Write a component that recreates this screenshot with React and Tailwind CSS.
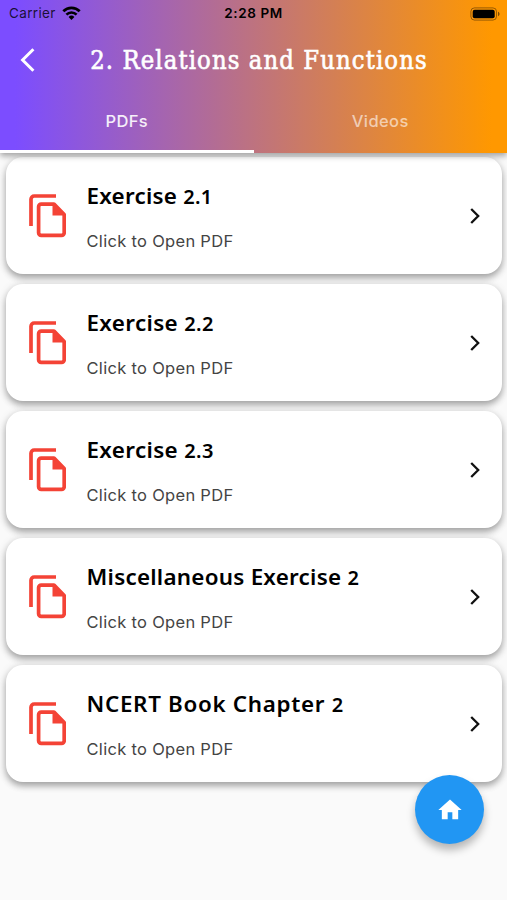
import React, { useState } from "react";

const pdfs = [
  { name: "Exercise", number: "2.1", spacing: "tracking-[0.25px]" },
  { name: "Exercise", number: "2.2", spacing: "tracking-[0.36px]" },
  { name: "Exercise", number: "2.3", spacing: "tracking-[0.36px]" },
  { name: "Miscellaneous Exercise", number: "2", spacing: "tracking-[0.25px]" },
  { name: "NCERT Book Chapter", number: "2", spacing: "tracking-[0.68px]" },
];

function StatusBar() {
  return (
    <div className="grid grid-cols-3 items-center h-7 pl-[9px] pr-[7px] text-[13.5px] leading-none text-black">
      <div className="flex items-center gap-[6px]">
        <span className="tracking-[0.35px] text-black/80">Carrier</span>
        <svg className="w-[19px] h-[14px] -mt-[2px]" viewBox="0 0 19 14" fill="none" stroke="currentColor">
          <path strokeWidth="2.7" d="M1.3 5.3a11.6 11.6 0 0 1 16.4 0" />
          <path strokeWidth="2.6" d="M4.4 8.6a7.2 7.2 0 0 1 10.2 0" />
          <path fill="currentColor" stroke="none" d="M9.5 14L6.6 11a4.1 4.1 0 0 1 5.8 0z" />
        </svg>
      </div>
      <span className="-ml-[2px] text-center font-semibold tracking-[0.6px] whitespace-nowrap">2:28 PM</span>
      <svg className="justify-self-end w-[30px] h-[14px] -mt-[1px]" viewBox="0 0 30 14" fill="none">
        <rect x="0.9" y="0.9" width="25.6" height="12.2" rx="3.6" stroke="#000" strokeOpacity="0.4" />
        <rect x="2.7" y="2.7" width="22" height="8.6" rx="2" fill="#000" />
        <path d="M28 4.8c2 .7 2 3.7 0 4.4z" fill="#000" fillOpacity="0.5" />
      </svg>
    </div>
  );
}

function PdfIcon() {
  return (
    <svg className="w-[37px] h-[44px] shrink-0" viewBox="0 0 37 44" fill="none">
      <path
        d="M27 2H5.2A3.2 3.2 0 0 0 2 5.2V32"
        stroke="#f44336"
        strokeWidth="3.7"
      />
      <path
        d="M12.2 10.1H25L35.2 20.5V38.8A2.6 2.6 0 0 1 32.6 41.4H12.2A2.6 2.6 0 0 1 9.6 38.8V12.7A2.6 2.6 0 0 1 12.2 10.1Z"
        stroke="#f44336"
        strokeWidth="3.7"
        strokeLinejoin="round"
      />
      <path d="M23.5 9.5V21.6H36V20L25.5 9.5z" fill="#f44336" />
    </svg>
  );
}

function PdfCard({ pdf }) {
  return (
    <button className="flex items-center w-full h-[117px] pt-[1px] pl-[23px] pr-[21px] rounded-[17px] bg-white text-left shadow-[0_4px_6px_rgba(0,0,0,0.26),0_2px_10px_rgba(0,0,0,0.16)]">
      <PdfIcon />
      <div className="flex flex-col grow pt-[2px] pl-[20.5px]">
        <span
          className={`font-['Noto_Sans'] font-semibold text-[22.4px] leading-[30px] text-black whitespace-nowrap ${pdf.spacing}`}
        >
          {pdf.name} <span className="text-[20px]">{pdf.number}</span>
        </span>
        <span className="mt-[17px] text-[16.5px] leading-[24px] tracking-[0.3px] text-[#444]">
          Click to Open PDF
        </span>
      </div>
      <svg className="w-[12px] h-[18px] shrink-0" viewBox="0 0 12 18" fill="none">
        <path d="M2.2 2L9.2 9L2.2 16" stroke="#111" strokeWidth="2.3" />
      </svg>
    </button>
  );
}

export default function App() {
  const [tab, setTab] = useState("pdfs");

  return (
    <div className="relative flex flex-col w-full h-[900px] overflow-hidden bg-[#fafafa] font-['Inter',sans-serif]">
      {/* Header */}
      <header className="relative z-10 flex flex-col h-[153px] shrink-0 bg-linear-to-r/srgb from-[#7c4dff] from-[3%] to-[#ff9800] to-[97%] shadow-[0_3px_6px_rgba(0,0,0,0.35)]">
        <StatusBar />
        <div className="flex items-center h-[63px] px-[20px]">
          <button className="w-[16px] shrink-0">
            <svg className="w-[16px] h-[26px]" viewBox="0 0 16 26" fill="none">
              <path d="M13.4 2.2L2.6 13L13.4 23.8" stroke="#fff" strokeWidth="3" />
            </svg>
          </button>
          <h1 className="grow pt-[2px] pl-[3px] text-center whitespace-nowrap font-['DejaVu_Serif_Condensed','DejaVu_Serif',serif] font-normal [font-stretch:condensed] [-webkit-text-stroke:0.6px_white] text-[25.3px] leading-[34px] tracking-[1.12px] text-white">
            2. Relations and Functions
          </h1>
          <div className="w-[8px] shrink-0" />
        </div>

        {/* Tabs */}
        <div className="grid grid-cols-2 grow text-[16.5px] font-medium tracking-[0.4px]">
          <button
            onClick={() => setTab("pdfs")}
            className={`pt-[2px] border-b-[3px] ${tab === "pdfs" ? "border-white text-white/90" : "border-transparent text-white/60"}`}
          >
            PDFs
          </button>
          <button
            onClick={() => setTab("videos")}
            className={`pt-[2px] border-b-[3px] ${tab === "videos" ? "border-white text-white/90" : "border-transparent text-white/60"}`}
          >
            Videos
          </button>
        </div>
      </header>

      {/* PDF list */}
      <main className="flex flex-col gap-[10px] pt-[4.4px] pl-[6px] pr-[5px]">
        {pdfs.map((pdf) => (
          <PdfCard key={pdf.name + pdf.number} pdf={pdf} />
        ))}
      </main>

      {/* Floating home button */}
      <button className="absolute right-[23px] bottom-[56px] z-20 flex items-center justify-center size-[69px] rounded-full bg-[#2196f3] shadow-[0_6px_9px_rgba(0,0,0,0.28)]">
        <svg className="size-[28px]" viewBox="0 0 24 24" fill="#fff">
          <path d="M10 20v-6h4v6h5v-8h3L12 3 2 12h3v8z" />
        </svg>
      </button>
    </div>
  );
}
